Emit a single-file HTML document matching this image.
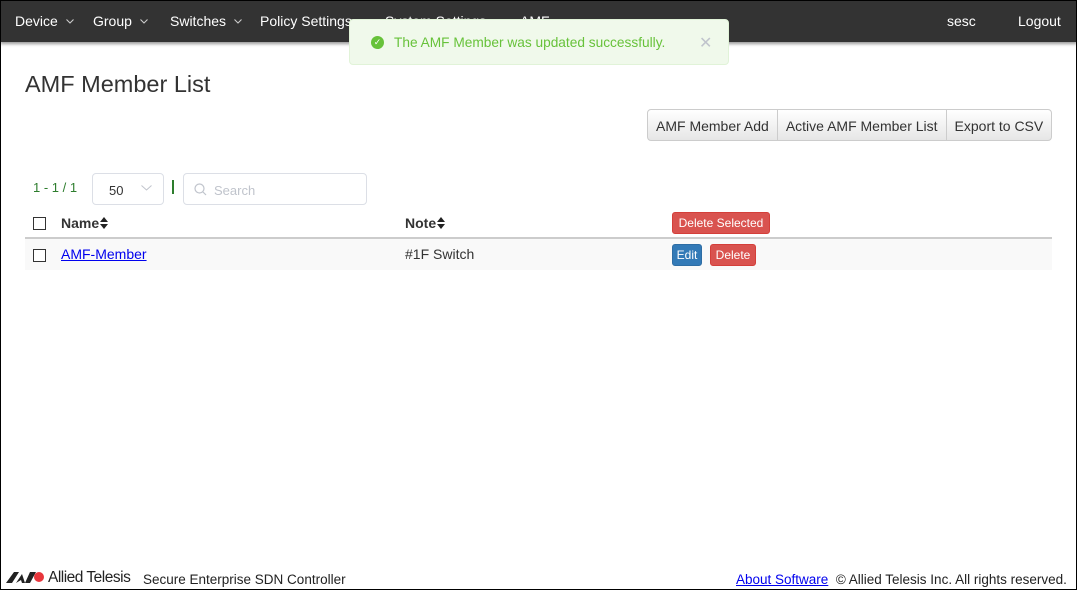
<!DOCTYPE html>
<html><head><meta charset="utf-8"><style>
*{box-sizing:border-box}
body{margin:0;width:1077px;height:590px;overflow:hidden;font-family:"Liberation Sans",sans-serif;color:#333;background:#fff;position:relative}
.frame{position:absolute;inset:0;border:1px solid #000;pointer-events:none;z-index:10}
.nav{position:absolute;left:0;top:0;width:1077px;height:42px;background:#333;box-shadow:0 2px 3px rgba(0,0,0,.4)}
.nav span{position:absolute;top:13px;color:#fff;font-size:14px}
.car{margin-left:8px;vertical-align:2px}
.toast{position:absolute;left:349px;top:19px;width:380px;height:46px;background:#f0f9eb;border:1px solid #e1f3d8;border-radius:4px;color:#67c23a;font-size:14px}
.toast .ic{position:absolute;left:21px;top:16px;width:13px;height:13px;border-radius:50%;background:#67c23a;color:#fff;font-size:9px;line-height:13px;text-align:center}
.toast .t{position:absolute;left:44px;top:15px;font-size:13.7px}
.toast .x{position:absolute;left:349px;top:13px;color:#c0c4cc;font-size:16px}
h1{position:absolute;left:25px;top:71px;margin:0;font-weight:normal;font-size:23.5px;color:#333}
.bg{position:absolute;left:647px;top:109px;height:32px;display:flex;border:1px solid #ccc;border-radius:4px;background:linear-gradient(#fff,#e6e6e6);overflow:hidden}
.bg div{padding:0 8px;line-height:32px;font-size:14px;border-left:1px solid #ccc}
.bg div:first-child{border-left:0}
.pg{position:absolute;left:33px;top:180px;font-size:13px;color:#2d7d2d}
.sel{position:absolute;left:92px;top:173px;width:72px;height:32px;border:1px solid #dcdfe6;border-radius:4px;font-size:13px;padding:9px 0 0 16px}
.sel svg{position:absolute;right:11px;top:11px}
.bar{position:absolute;left:172px;top:180px;width:2px;height:14px;background:#2d7d2d}
.srch{position:absolute;left:183px;top:173px;width:184px;height:32px;border:1px solid #dcdfe6;border-radius:4px;color:#c0c4cc;font-size:13px;padding:9px 0 0 30px}
.srch svg{position:absolute;left:10px;top:9px}
.cb{position:absolute;width:13px;height:13px;border:1px solid #333;background:#fff}
.th{position:absolute;font-weight:bold;font-size:14px;top:215px}
.th svg{vertical-align:-1px;margin-left:1px}
.line{position:absolute;left:25px;top:237px;width:1027px;height:2px;background:#ccc}
.row{position:absolute;left:25px;top:239px;width:1027px;height:31px;background:#f9f9f9}
.btn{position:absolute;color:#fff;font-size:12px;border-radius:3px;text-align:center;line-height:21px;height:22px}
.red{background:#d9534f;border:1px solid #d43f3a}
.blue{background:#337ab7;border:1px solid #2e6da4}
.foot{position:absolute;top:572px;font-size:13.5px;color:#222}
</style></head><body>
<div class="frame"></div>
<div class="nav">
<span style="left:15px">Device<svg class="car" width="8" height="5" viewBox="0 0 8 5"><path d="M0.5 0.5L4 4L7.5 0.5" fill="none" stroke="#ccc" stroke-width="1.1"/></svg></span>
<span style="left:93px">Group<svg class="car" width="8" height="5" viewBox="0 0 8 5"><path d="M0.5 0.5L4 4L7.5 0.5" fill="none" stroke="#ccc" stroke-width="1.1"/></svg></span>
<span style="left:170px">Switches<svg class="car" width="8" height="5" viewBox="0 0 8 5"><path d="M0.5 0.5L4 4L7.5 0.5" fill="none" stroke="#ccc" stroke-width="1.1"/></svg></span>
<span style="left:260px">Policy Settings</span>
<span style="left:385px">System Settings</span>
<span style="left:520px">AMF</span>
<span style="left:947px">sesc</span>
<span style="left:1018px">Logout</span>
</div>
<div class="toast"><div class="ic">&#10003;</div><div class="t">The AMF Member was updated successfully.</div><div class="x">&#10005;</div></div>
<h1>AMF Member List</h1>
<div class="bg"><div>AMF Member Add</div><div>Active AMF Member List</div><div>Export to CSV</div></div>
<div class="pg">1 - 1 / 1</div>
<div class="sel">50<svg width="11" height="6" viewBox="0 0 11 6"><path d="M0.5 0.5L5.5 5L10.5 0.5" fill="none" stroke="#c0c4cc" stroke-width="1"/></svg></div>
<div class="bar"></div>
<div class="srch"><svg width="13" height="13" viewBox="0 0 13 13"><circle cx="5.5" cy="5.5" r="4.5" fill="none" stroke="#c0c4cc" stroke-width="1.2"/><path d="M9 9l3 3" stroke="#c0c4cc" stroke-width="1.2"/></svg>Search</div>
<div class="cb" style="left:33px;top:217px"></div>
<div class="th" style="left:61px">Name<svg width="8" height="12" viewBox="0 0 8 12"><path d="M4 0L8 5H0zM4 12L8 7H0z" fill="#222"/></svg></div>
<div class="th" style="left:405px">Note<svg width="8" height="12" viewBox="0 0 8 12"><path d="M4 0L8 5H0zM4 12L8 7H0z" fill="#222"/></svg></div>
<div class="btn red" style="left:672px;top:212px;width:98px">Delete Selected</div>
<div class="line"></div>
<div class="row"></div>
<div class="cb" style="left:33px;top:249px"></div>
<a style="position:absolute;left:61px;top:246px;font-size:14px;color:#00e;text-decoration:underline">AMF-Member</a>
<div style="position:absolute;left:405px;top:246px;font-size:14px">#1F Switch</div>
<div class="btn blue" style="left:672px;top:244px;width:30px">Edit</div>
<div class="btn red" style="left:710px;top:244px;width:46px">Delete</div>
<svg style="position:absolute;left:6px;top:571px" width="40" height="13" viewBox="0 0 40 13"><path d="M0 12L8 1h5L6 12zM10 12l6-9 3 9h-3l-1-3zM19 12l5-11h6l-6 11z" fill="#222"/><circle cx="33" cy="6" r="5" fill="#e8363c"/></svg>
<div class="foot" style="left:48px;top:569px;font-size:15.5px;letter-spacing:-0.5px">Allied Telesis</div>
<div class="foot" style="left:143px">Secure Enterprise SDN Controller</div>
<div class="foot" style="left:736px"><span style="color:#00e;text-decoration:underline">About Software</span>&nbsp; © Allied Telesis Inc. All rights reserved.</div>
</body></html>
